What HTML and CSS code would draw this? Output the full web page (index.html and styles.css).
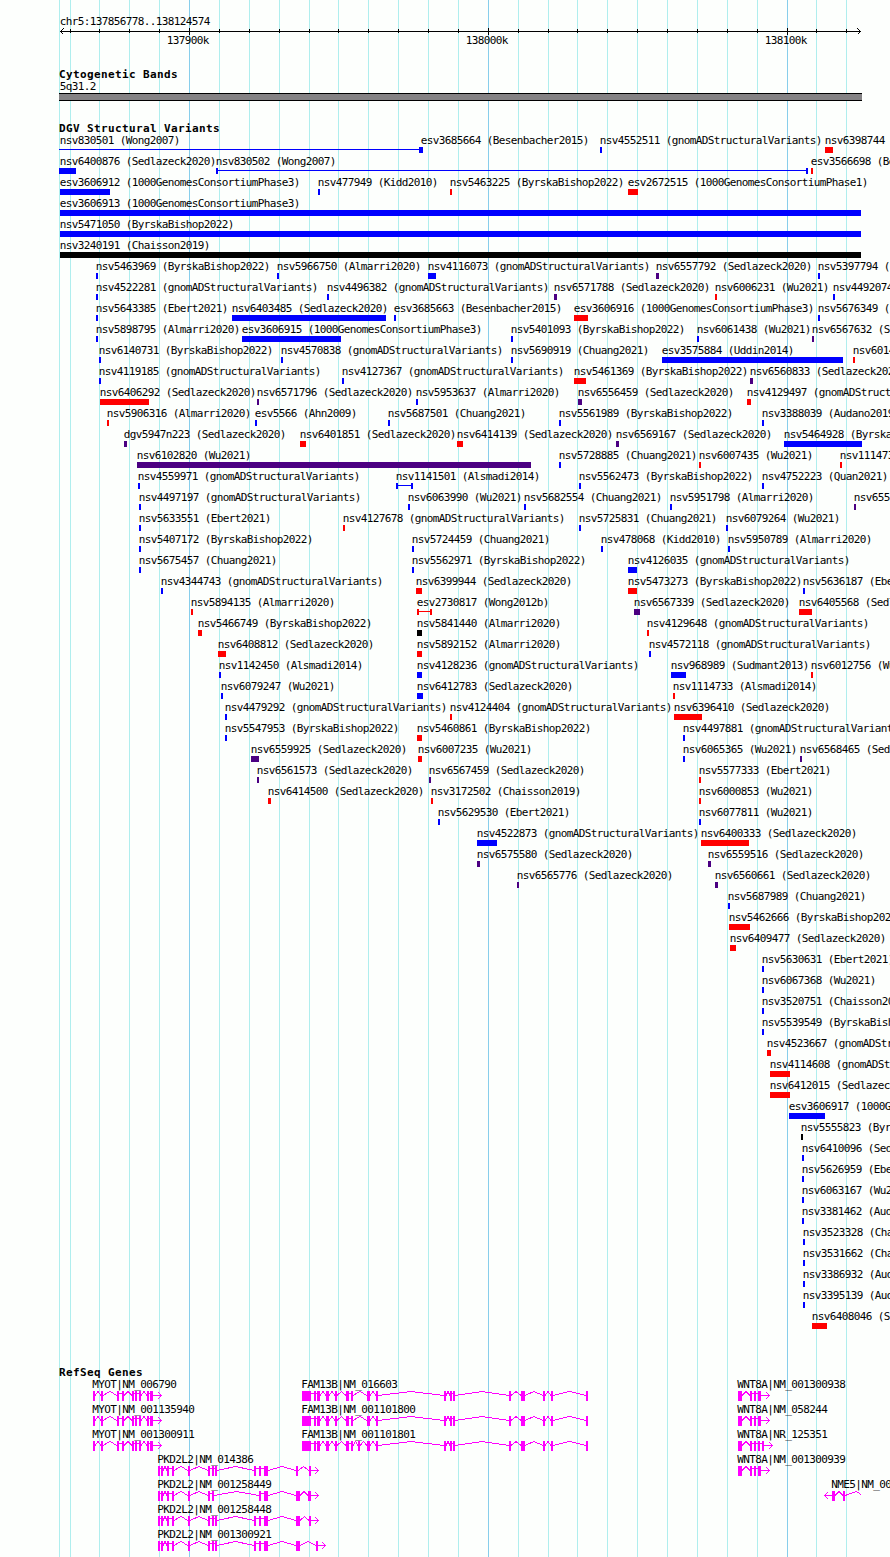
FILE: index.html
```html
<!DOCTYPE html>
<html lang="en">
<head>
<meta charset="utf-8">
<title>chr5:137856778..138124574</title>
<link rel="stylesheet" href="styles.css">
</head>
<body>
<svg id="browser" class="browser" width="890" height="1557" viewBox="0 0 890 1557"></svg>
<script src="tracks.js"></script>
</body>
</html>
```
FILE: styles.css
```css
body { margin: 0; background: #fdfffd; overflow: hidden; }
.browser { display: block; font-family: "DejaVu Sans Mono", monospace; font-size: 11px; shape-rendering: crispEdges; }
.label { fill: #000; letter-spacing: -0.622px; white-space: pre; }
.title { fill: #000; font-weight: bold; letter-spacing: 0.378px; white-space: pre; }
.grid { fill: #afeeee; }
.grid-major { fill: #87ceeb; }
.ink { fill: #000; }
.ink-line { fill: none; stroke: #000; stroke-width: 1; }
.band { fill: #848284; }
.gain { fill: #0000ff; }
.loss { fill: #ff0000; }
.complex { fill: #4b0082; }
.inversion { fill: #000; }
.exon { fill: #ff00ff; }
.intron { fill: none; stroke: #ff00ff; stroke-width: 1; }
```
FILE: tracks.js
```js
const svg = document.getElementById('browser');

function add(tag, cls, attrs, text) {
  const el = document.createElementNS('http://www.w3.org/2000/svg', tag);
  el.setAttribute('class', cls);
  for (const k in attrs) el.setAttribute(k, attrs[k]);
  if (text) el.textContent = text;
  svg.appendChild(el);
}
const rect = (cls, x, y, width, height) => add('rect', cls, { x, y, width, height });
const label = (x, y, text) => add('text', 'label', { x: x - 0.2, y }, text);
const title = (x, y, text) => add('text', 'title', { x, y }, text);
const path = (cls, d) => add('path', cls, { d });

// Ruler grid
const majors = [189, 488, 787];
const minors = [70, 99, 129, 159, 219, 249, 279, 309, 338, 368, 398, 428, 458, 518, 548,
  577, 607, 637, 667, 697, 727, 757, 816, 846];
rect('grid', 59, 0, 1, 1557);
minors.forEach(x => rect('grid', x, 0, 1, 1557));
majors.forEach(x => rect('grid-major', x, 0, 1, 1557));

label(60, 25, 'chr5:137856778..138124574');
rect('ink', 60, 31, 801, 1);
minors.forEach(x => rect('ink', x, 29, 1, 4));
majors.forEach(x => rect('ink', x, 28, 1, 7));
path('ink-line', 'M63.5 28.5L60.5 31.5L63.5 34.5M857.5 28.5L860.5 31.5L857.5 34.5');
label(167, 44, '137900k');
label(466, 44, '138000k');
label(765, 44, '138100k');

// Cytogenetic band
title(59, 78, 'Cytogenetic Bands');
label(60, 90, '5q31.2');
rect('ink', 59, 93, 803, 8);
rect('band', 59, 94, 803, 6);

// Structural variants: [name, study, x, width, kind, label x]
const G = 'gain', L = 'loss', C = 'complex', I = 'inversion';
const gn = 'gnomADStructuralVariants', by = 'ByrskaBishop2022', se = 'Sedlazeck2020',
  al = 'Almarri2020', wu = 'Wu2021', eb = 'Ebert2021', ch = 'Chuang2021',
  as = 'Alsmadi2014', ca = 'Chaisson2019', au = 'Audano2019', kg = '1000GenomesConsortiumPhase3';
const rows = [
  [['nsv830501', 'Wong2007', 59, 0, G, 60], ['esv3685664', 'Besenbacher2015', 421, 2, G], ['nsv4552511', gn, 600, 2, G], ['nsv6398744', se, 825, 8, L]],
  [['nsv6400876', se, 59, 17, G, 60], ['nsv830502', 'Wong2007', 216, 2, G], ['esv3566698', 'Besenbacher2015', 811, 2, L]],
  [['esv3606912', kg, 60, 50, G], ['nsv477949', 'Kidd2010', 318, 2, G], ['nsv5463225', by, 450, 2, L], ['esv2672515', '1000GenomesConsortiumPhase1', 628, 10, L]],
  [['esv3606913', kg, 60, 801, G]],
  [['nsv5471050', by, 60, 801, G]],
  [['nsv3240191', ca, 60, 801, I]],
  [['nsv5463969', by, 96, 2, G], ['nsv5966750', al, 277, 2, G], ['nsv4116073', gn, 428, 8, G], ['nsv6557792', se, 656, 3, C], ['nsv5397794', by, 818, 2, G]],
  [['nsv4522281', gn, 96, 2, G], ['nsv4496382', gn, 327, 2, G], ['nsv6571788', se, 554, 3, C], ['nsv6006231', wu, 715, 2, L], ['nsv4492074', gn, 833, 2, G]],
  [['nsv5643385', eb, 96, 2, G], ['nsv6403485', se, 232, 154, G], ['esv3685663', 'Besenbacher2015', 394, 2, G], ['esv3606916', kg, 574, 14, L], ['nsv5676349', by, 818, 2, G]],
  [['nsv5898795', al, 96, 2, G], ['esv3606915', kg, 242, 99, G], ['nsv5401093', by, 511, 2, G], ['nsv6061438', wu, 697, 2, G], ['nsv6567632', se, 812, 2, C]],
  [['nsv6140731', by, 99, 2, G], ['nsv4570838', gn, 281, 2, G], ['nsv5690919', ch, 511, 2, G], ['esv3575884', 'Uddin2014', 662, 181, G], ['nsv6014', wu, 853, 2, L]],
  [['nsv4119185', gn, 99, 2, G], ['nsv4127367', gn, 342, 2, G], ['nsv5461369', by, 574, 12, L], ['nsv6560833', se, 750, 3, C]],
  [['nsv6406292', se, 100, 49, L], ['nsv6571796', se, 257, 2, C], ['nsv5953637', al, 416, 2, G], ['nsv6556459', se, 578, 4, C], ['nsv4129497', gn, 747, 4, L]],
  [['nsv5906316', al, 107, 2, L], ['esv5566', 'Ahn2009', 255, 2, G], ['nsv5687501', ch, 388, 2, G], ['nsv5561989', by, 559, 2, G], ['nsv3388039', au, 762, 2, G]],
  [['dgv5947n223', se, 124, 3, C], ['nsv6401851', se, 300, 6, L], ['nsv6414139', se, 457, 6, L], ['nsv6569167', se, 616, 3, C], ['nsv5464928', by, 784, 78, G]],
  [['nsv6102820', wu, 137, 394, C], ['nsv5728885', ch, 559, 2, G], ['nsv6007435', wu, 699, 2, L], ['nsv1114732', as, 840, 2, L]],
  [['nsv4559971', gn, 138, 2, G], ['nsv1141501', as, 396, 2, G], ['nsv5562473', by, 579, 2, G], ['nsv4752223', 'Quan2021', 762, 2, G]],
  [['nsv4497197', gn, 139, 2, G], ['nsv6063990', wu, 408, 2, G], ['nsv5682554', ch, 524, 2, G], ['nsv5951798', al, 670, 2, G], ['nsv655', se, 854, 2, C]],
  [['nsv5633551', eb, 139, 2, G], ['nsv4127678', gn, 343, 2, L], ['nsv5725831', ch, 579, 2, G], ['nsv6079264', wu, 726, 2, G]],
  [['nsv5407172', by, 139, 2, G], ['nsv5724459', ch, 412, 2, G], ['nsv478068', 'Kidd2010', 601, 2, G], ['nsv5950789', al, 728, 2, G]],
  [['nsv5675457', ch, 139, 2, G], ['nsv5562971', by, 412, 2, G], ['nsv4126035', gn, 628, 9, G]],
  [['nsv4344743', gn, 161, 2, G], ['nsv6399944', se, 416, 6, L], ['nsv5473273', by, 628, 9, L], ['nsv5636187', eb, 803, 2, G]],
  [['nsv5894135', al, 191, 2, L], ['esv2730817', 'Wong2012b', 417, 2, L], ['nsv6567339', se, 634, 6, C], ['nsv6405568', se, 799, 13, L]],
  [['nsv5466749', by, 198, 4, L], ['nsv5841440', al, 417, 5, I], ['nsv4129648', gn, 647, 2, L]],
  [['nsv6408812', se, 218, 8, L], ['nsv5892152', al, 417, 5, L], ['nsv4572118', gn, 649, 2, G]],
  [['nsv1142450', as, 219, 2, G], ['nsv4128236', gn, 417, 5, G], ['nsv968989', 'Sudmant2013', 671, 15, G], ['nsv6012756', wu, 811, 2, L]],
  [['nsv6079247', wu, 221, 2, G], ['nsv6412783', se, 417, 6, G], ['nsv1114733', as, 673, 2, L]],
  [['nsv4479292', gn, 225, 2, G], ['nsv4124404', gn, 450, 2, L], ['nsv6396410', se, 674, 28, L]],
  [['nsv5547953', by, 225, 2, G], ['nsv5460861', by, 417, 5, L], ['nsv4497881', gn, 683, 2, G]],
  [['nsv6559925', se, 251, 8, C], ['nsv6007235', wu, 418, 4, L], ['nsv6065365', wu, 683, 2, G], ['nsv6568465', se, 800, 2, C]],
  [['nsv6561573', se, 257, 2, C], ['nsv6567459', se, 429, 2, C], ['nsv5577333', eb, 699, 2, L]],
  [['nsv6414500', se, 268, 3, L], ['nsv3172502', ca, 431, 2, L], ['nsv6000853', wu, 699, 2, L]],
  [['nsv5629530', eb, 438, 2, G], ['nsv6077811', wu, 699, 2, G]],
  [['nsv4522873', gn, 477, 20, G], ['nsv6400333', se, 701, 48, L]],
  [['nsv6575580', se, 477, 3, C], ['nsv6559516', se, 708, 3, C]],
  [['nsv6565776', se, 517, 2, C], ['nsv6560661', se, 715, 3, C]],
  [['nsv5687989', ch, 728, 2, G]],
  [['nsv5462666', by, 729, 21, L]],
  [['nsv6409477', se, 730, 6, L]],
  [['nsv5630631', eb, 762, 2, G]],
  [['nsv6067368', wu, 762, 2, G]],
  [['nsv3520751', ca, 762, 2, G]],
  [['nsv5539549', by, 762, 2, G]],
  [['nsv4523667', gn, 767, 4, L]],
  [['nsv4114608', gn, 770, 20, L]],
  [['nsv6412015', se, 770, 20, L]],
  [['esv3606917', kg, 789, 36, G]],
  [['nsv5555823', by, 801, 2, I]],
  [['nsv6410096', se, 802, 2, G]],
  [['nsv5626959', eb, 802, 2, G]],
  [['nsv6063167', wu, 802, 2, G]],
  [['nsv3381462', au, 802, 2, G]],
  [['nsv3523328', ca, 803, 2, G]],
  [['nsv3531662', ca, 803, 2, G]],
  [['nsv3386932', au, 803, 2, G]],
  [['nsv3395139', au, 803, 2, G]],
  [['nsv6408046', se, 812, 15, L]]
];
title(59, 132, 'DGV Structural Variants');
rows.forEach((row, i) => row.forEach(([name, study, x, w, kind, lx]) => {
  label(lx || x, 144 + 21 * i, `${name} (${study})`);
  if (w) rect(kind, x, 147 + 21 * i, w, 6);
}));

// Spans joining two breakpoints: [row, from, to, kind]
[[0, 59, 421, G], [1, 216, 808, G], [16, 396, 413, G], [22, 417, 432, L]].forEach(([i, a, b, kind]) => {
  rect(kind, a, 149 + 21 * i, b - a, 1);
  rect(kind, b - 2, 147 + 21 * i, 2, 6);
});

// Genes: [label, label x, row, exons, tip]
const myot = [[93, 2], [101, 2], [117, 2], [122, 2], [132, 2], [135, 2], [139, 2], [147, 2], [150, 3]];
const fam = [[302, 9], [314, 2], [317, 3], [326, 3], [335, 2], [346, 3], [351, 2], [367, 3], [376, 2],
  [444, 2], [450, 2], [453, 2], [509, 2], [521, 4], [543, 2], [551, 2], [586, 2]];
const fam3 = [...fam.slice(0, 7), [358, 2], ...fam.slice(7)];
const pkd = [[158, 2], [161, 2], [167, 2], [172, 2], [188, 2], [208, 2], [212, 2], [215, 2],
  [254, 2], [259, 2], [264, 4]];
const wnt = [[738, 4], [750, 2], [754, 2], [758, 3]];
const genes = [
  ['MYOT|NM_006790', 93, 0, myot, 162],
  ['MYOT|NM_001135940', 93, 1, myot, 162],
  ['MYOT|NM_001300911', 93, 2, myot, 162],
  ['FAM13B|NM_016603', 302, 0, fam],
  ['FAM13B|NM_001101800', 302, 1, fam],
  ['FAM13B|NM_001101801', 302, 2, fam3],
  ['PKD2L2|NM_014386', 158, 3, [...pkd, [296, 2], [309, 2]], 319],
  ['PKD2L2|NM_001258449', 158, 4, [...pkd.slice(0, 7), [259, 2], [264, 4], [296, 4], [308, 3]], 319],
  ['PKD2L2|NM_001258448', 158, 5, [...pkd, [296, 4], [309, 2]], 319],
  ['PKD2L2|NM_001300921', 158, 6, [...pkd, [296, 4], [316, 2]], 326],
  ['WNT8A|NM_001300938', 738, 0, wnt, 770],
  ['WNT8A|NM_058244', 738, 1, wnt, 770],
  ['WNT8A|NR_125351', 738, 2, [...wnt.slice(0, 3), [758, 2], [762, 2]], 773],
  ['WNT8A|NM_001300939', 738, 3, wnt, 770],
  ['NME5|NM_003551', 832, 4, [[832, 3], [843, 2], [868, 0]], -824]
];
title(59, 1376, 'RefSeq Genes');
genes.forEach(([name, lx, row, exons, tip]) => {
  const y = 1391 + 25 * row, mid = y + 4.5;
  label(lx - 0.5, y - 3, name);
  exons.forEach(([x, w], i) => {
    if (w) rect('exon', x, y, w, 10);
    if (!i) return;
    const a = exons[i - 1][0] + exons[i - 1][1];
    if (!w) path('intron', `M${a} ${mid}L${(a + x) / 2} ${y + 0.5}L861 ${mid - 1}`);
    else if (x - a <= 3) path('intron', `M${a} ${y + 2.5}H${x}`);
    else path('intron', `M${a} ${mid}L${(a + x) / 2} ${y + 0.5}L${x} ${mid}`);
  });
  if (tip > 0) {
    const end = exons[exons.length - 1];
    path('intron', `M${end[0] + end[1]} ${mid}H${tip}M${tip - 4} ${mid - 3.5}L${tip - 0.5} ${mid}L${tip - 4} ${mid + 3.5}`);
  } else if (tip < 0) {
    path('intron', `M${exons[0][0]} ${mid}H${-tip}M${-tip + 4} ${mid - 3.5}L${-tip + 0.5} ${mid}L${-tip + 4} ${mid + 3.5}`);
  }
});
```
